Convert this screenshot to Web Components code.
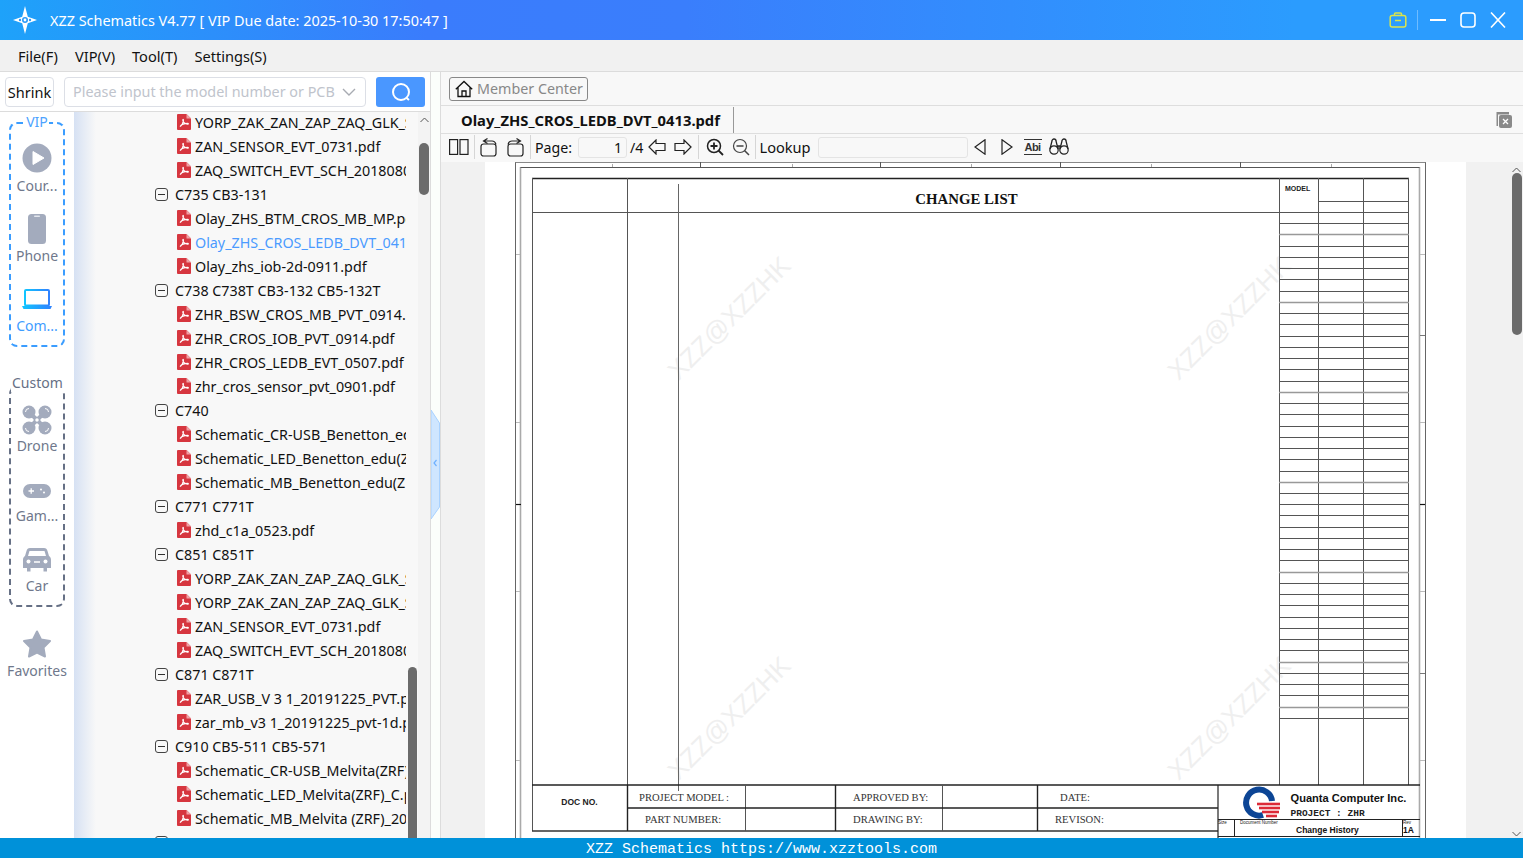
<!DOCTYPE html>
<html lang="en"><head><meta charset="utf-8"><title>XZZ Schematics</title>
<style>
html,body{margin:0;padding:0;height:100%;overflow:hidden}
body{font-family:"Noto Sans","Liberation Sans",sans-serif;font-size:14px;color:#111;background:#fff}
</style></head><body>
<xzz-app></xzz-app>
<script>
const NS='http://www.w3.org/2000/svg';
function def(name,css,html,init){
  customElements.define(name,class extends HTMLElement{
    constructor(){super();const r=this.attachShadow({mode:'open'});r.innerHTML='<style>'+css+'</style>'+html;if(init)init(r,this);}
  });
}
const pdfIcon=`<svg width="14" height="16" viewBox="0 0 14 16"><path d="M1 0H9.5L14 4.5V15a1 1 0 0 1-1 1H1a1 1 0 0 1-1-1V1a1 1 0 0 1 1-1Z" fill="#d6363f"/><path d="M9.5 0V4.5H14Z" fill="#f0a0a5"/><path d="M3 12.5C4.6 11.6 6 9 6.4 6.5 6.6 5.2 5.9 5 5.8 6 5.6 7.7 7.9 10 10.6 10.2 11.7 10.2 11.6 9.4 10.6 9.4 8.2 9.4 4.6 10.4 3 12.5Z" fill="none" stroke="#fff" stroke-width="1.1"/></svg>`;

def('xzz-titlebar',`
:host{display:flex;align-items:center;height:40px;flex:none;color:#fff;background:linear-gradient(90deg,#1ea2fa 0,#3a7cfc 28%,#3a7efc 45%,#2b9cfe 85%,#2b9cfe 100%);}
.logo{margin-left:11px;width:28px;height:28px;flex:none}
.t{margin-left:11px;font-size:14.42px;white-space:nowrap;flex:1}
.r{display:flex;align-items:center}
svg{display:block}
.sep{width:1px;height:20px;background:#6fbcff;margin:0 11px 0 10px}
`,`
<svg class="logo" viewBox="0 0 28 28"><path d="M14 0 16.800 10.800 26 14 16.800 17.200 14 28 11.200 17.200 2 14 11.200 10.800Z" fill="#fff"/><circle cx="14" cy="14" r="3" fill="#2a9bf9"/><circle cx="14" cy="14" r="1.4" fill="#fff"/><circle cx="9" cy="14" r="1.2" fill="#2a9bf9"/><circle cx="19" cy="14" r="1.2" fill="#2a9bf9"/></svg>
<div class="t"><slot></slot></div>
<div class="r">
<svg width="18" height="16" viewBox="0 0 18 16" fill="none" stroke="#dbe44c" stroke-width="1.5"><rect x="1.2" y="3.5" width="15.6" height="11.5" rx="2"/><path d="M5.5 3.5V2a1 1 0 0 1 1-1h5a1 1 0 0 1 1 1v1.5M6 8.5h6"/></svg>
<div class="sep"></div>
<svg width="18" height="16" viewBox="0 0 18 16"><path d="M1 8H17" stroke="#fff" stroke-width="2"/></svg>
<svg style="margin-left:12px" width="18" height="16" viewBox="0 0 18 16"><rect x="2" y="1" width="14" height="14" rx="3" fill="none" stroke="#fff" stroke-width="1.6"/></svg>
<svg style="margin:0 16px 0 12px" width="18" height="16" viewBox="0 0 18 16"><path d="M2 0.5 16 15.5M16 0.5 2 15.5" stroke="#fff" stroke-width="1.6"/></svg>
</div>`);

def('xzz-menubar',`
:host{display:flex;gap:17px;align-items:center;height:32px;flex:none;background:#f1f1f1;padding-left:18px;box-sizing:border-box;font-size:14.6px;border-bottom:1px solid #dcdcdc}
`,`<slot></slot>`);

def('xzz-searchrow',`
:host{display:flex;align-items:center;height:40px;flex:none;box-sizing:border-box;border-bottom:1px solid #dcdcdc;padding:0 0 0 5px;background:#fff;}
.s{width:49px;height:30px;box-sizing:border-box;border:1px solid #dcdfe6;border-radius:4px;display:flex;align-items:center;justify-content:center;font-size:14.5px;flex:none;white-space:nowrap}
.i{margin-left:10px;width:302px;height:30px;box-sizing:border-box;border:1px solid #dcdfe6;border-radius:4px;display:flex;align-items:center;padding:0 9px 0 8px;color:#c0c4cc;font-size:14.35px;flex:none;white-space:nowrap;justify-content:space-between}
.b{margin-left:10px;width:49px;height:30px;border-radius:3px;background:#4a97ff;display:flex;align-items:center;justify-content:center;flex:none}
`,`<div class="s"><slot name="shrink"></slot></div>
<div class="i"><slot></slot><svg width="14" height="8" viewBox="0 0 14 8"><path d="M1 1 7 7 13 1" fill="none" stroke="#a8abb2" stroke-width="1.4"/></svg></div>
<div class="b"><svg width="20" height="20" viewBox="0 0 20 20"><circle cx="10" cy="10" r="8" fill="none" stroke="#fff" stroke-width="2"/><path d="M15 15.5 18 18" stroke="#fff" stroke-width="2"/></svg></div>`);

def('xzz-railitem',`
:host{display:flex;flex-direction:column;align-items:center;height:70px;box-sizing:border-box;font-size:14px;color:#6f788c;white-space:nowrap}
:host([active]){color:#3f9dff}
.ic{height:32px;width:32px;display:flex;align-items:center;justify-content:center;flex:none;margin-bottom:1px}
.lb{line-height:20px}
`,`<div class="ic"><slot name="icon"></slot></div><div class="lb"><slot></slot></div>`);

def('xzz-railgroup',`
:host{display:block;position:relative;width:56px;box-sizing:border-box;border:2px dashed var(--c);border-radius:8px;margin-left:9px}
.l{position:absolute;top:var(--lt,-11px);left:0;right:0;text-align:center;font-size:14px;line-height:18px;color:var(--tc);white-space:nowrap}
.l span{background:#fff;padding:0 1px}
`,`<div class="l"><span><slot name="legend"></slot></span></div><slot></slot>`);

def('xzz-rail',`
:host{display:block;width:74px;flex:none;background:#fff;padding-top:10px;box-sizing:border-box;overflow:hidden}
`,`<slot></slot>`);

def('xzz-group',`
:host{display:flex;align-items:center;height:24px;padding-left:81px;white-space:nowrap;overflow:hidden;font-size:14.3px}
.m{width:13px;height:13px;box-sizing:border-box;border:1px solid #444;border-radius:3px;margin-right:7px;flex:none;position:relative;display:flex;align-items:center;justify-content:center}
.m i{display:block;width:7px;height:1px;background:#333}
`,`<span class="m"><i></i></span><slot></slot>`);
def('xzz-file',`
:host{display:flex;align-items:center;height:24px;padding-left:103px;white-space:nowrap;overflow:hidden;font-size:14.3px}
:host([active]){color:#4b9bff}
svg{flex:none;margin-right:4px}
`,pdfIcon+`<slot></slot>`);

def('xzz-tree',`
:host{display:block;position:relative;flex:1;min-width:0;overflow:hidden;background:linear-gradient(90deg,#d6e1f3 0,#f8f8f8 22px)}
.list{margin-top:-2px;width:332px}
.track{position:absolute;left:344px;top:0;bottom:0;width:12px;background:#f3f3f3}
.up{position:absolute;left:2px;top:5px}
.th{position:absolute;background:#6b6b6b;border-radius:5px}
.a{left:1px;top:31px;width:10px;height:52px}
.b{left:334px;top:555px;width:9px;height:180px}
`,`<div class="list"><slot></slot></div>
<div class="track"><svg class="up" width="9" height="6" viewBox="0 0 9 6"><path d="M0.5 5 4.5 1 8.5 5" fill="none" stroke="#555"/></svg><div class="th a"></div></div>
<div class="th b"></div>`);

def('xzz-sidepanel',`
:host{display:flex;flex-direction:column;width:430px;flex:none;min-height:0}
.b{display:flex;flex:1;min-height:0}
`,`<slot name="top"></slot><div class="b"><slot></slot></div>`);

def('xzz-splitter',`
:host{display:block;position:relative;width:11px;flex:none;background:#fbfefb;box-sizing:border-box;border-left:1px solid #dcdcdc;border-right:1px solid #dcdcdc}
svg{position:absolute;left:0;top:338px}
`,`<svg width="9" height="110" viewBox="0 0 9 110"><path d="M0 0 8.5 13V97L0 109Z" fill="#cfe6ff" stroke="#a9d2ff" stroke-width="1"/><path d="M5.5 50 3 53 5.500 56" fill="none" stroke="#6fb1ff" stroke-width="1.2"/></svg>`);

def('xzz-memberbar',`
:host{display:flex;align-items:center;height:34px;flex:none;box-sizing:border-box;padding-left:8px;background:#f8f8f8;border-bottom:1px solid #dedede}
.b{display:flex;align-items:center;height:24px;width:139px;box-sizing:border-box;border:1px solid #888;border-radius:3px;padding-left:5px;color:#888;font-size:14.3px;white-space:nowrap;gap:4px}
`,`<div class="b"><svg width="18" height="18" viewBox="0 0 18 18" fill="none" stroke="#111" stroke-width="1.3"><path d="M0.8 9.2 9 1.5 17.2 9.200M3 7.500V16.500H15V7.500M7 16.500V11H11V16.500"/></svg><slot></slot></div>`);

def('xzz-tabbar',`
:host{display:flex;align-items:center;height:28px;flex:none;box-sizing:border-box;background:#f8f8f8;border-bottom:1px solid #dedede;padding-left:20px;position:relative}
.t{font-weight:700;font-size:14.77px;white-space:nowrap;color:#111;padding-right:13px;height:26px;line-height:26px;border-right:1px solid #999}
.x{margin-left:auto;margin-right:10px}
`,`<div class="t"><slot></slot></div>
<svg class="x" width="18" height="18" viewBox="0 0 18 18"><path d="M3 1H1.500V15H3V3.500H14V1Z" fill="#8a8a8a"/><rect x="4" y="4" width="13" height="13" rx="2" fill="#8a8a8a"/><path d="M8 8l5 5M13 8l-5 5" stroke="#fff" stroke-width="1.300"/></svg>`);

def('xzz-toolsep',`:host{display:block;width:1px;height:24px;background:#d6d6d6;flex:none}`,``);
def('xzz-toolbar',`
:host{display:flex;align-items:center;height:28px;flex:none;box-sizing:border-box;background:#f8f8f8;padding:0 0 2px 8px;font-size:14.2px;white-space:nowrap}
::slotted(svg){flex:none;display:block}
`,`<slot></slot>`);
def('xzz-numbox',`
:host{display:flex;align-items:center;justify-content:flex-end;height:21px;box-sizing:border-box;border:1px solid #e4e4e4;border-radius:3px;background:#f8f8f8;padding-right:4px;flex:none}
`,`<slot></slot>`);

/* the schematic: a drawing on its own canvas, in screen coordinates */
def('xzz-sheet',`
:host{display:block;width:981px;flex:none;background:#fff;overflow:hidden}
svg{display:block}
text{white-space:pre}
`,`<svg id="s" width="981" height="676" viewBox="485 162 981 676"></svg>`,(r)=>{
  const s=r.getElementById('s');
  const L=(x1,y1,x2,y2,c='#555',w=1)=>{const e=document.createElementNS(NS,'line');[['x1',x1],['y1',y1],['x2',x2],['y2',y2],['stroke',c],['stroke-width',w]].forEach(a=>e.setAttribute(a[0],a[1]));s.appendChild(e);};
  const T=(x,y,t,o={})=>{const e=document.createElementNS(NS,'text');e.setAttribute('x',x);e.setAttribute('y',y);e.textContent=t;
    e.setAttribute('font-family',o.f||'Liberation Serif');e.setAttribute('font-size',o.s||10);if(o.b)e.setAttribute('font-weight','700');
    e.setAttribute('fill',o.c||'#333');if(o.a)e.setAttribute('text-anchor',o.a);if(o.r)e.setAttribute('transform',o.r);s.appendChild(e);};
  // watermarks
  [[729,318],[1229,318],[729,718],[1229,718]].forEach(p=>T(p[0],p[1]+9,'XZZ@XZZHK',{f:'Liberation Sans',s:26,c:'#efefef',a:'middle',r:`rotate(-45 ${p[0]} ${p[1]})`}));
  // sheet frame
  L(515.5,162,515.5,838,'#666');L(520.5,167,520.5,838,'#aaa',1.6);
  L(1425.5,162,1425.5,838,'#666');L(1419.5,167,1419.5,838,'#aaa',1.6);
  L(515.5,162.500,1425.5,162.500,'#888');L(520.5,167.5,1419.5,167.5,'#555');
  [700,880,1060,1240].forEach(x=>L(x+.5,162,x+.5,167,'#555'));
  [612,792,971,1151,1331].forEach(x=>L(x+.5,164,x+.5,167,'#aaa'));
  [254,422,591,760].forEach(y=>{L(516,y+.5,520,y+.5,'#bbb');L(1420,y+.5,1425,y+.5,'#bbb');});
  [335,673].forEach(y=>{L(1420,y+.5,1425,y+.5,'#777');});
  L(516,504.5,521,504.5,'#111',1.2);L(1420,504.5,1425,504.5,'#111',1.2);
  // main table
  L(532,178.5,1409,178.5,'#222',1.6);
  L(532.5,178,532.5,831,'#555');L(1408.5,178,1408.5,785,'#555');
  L(532,212.5,1279,212.5,'#555');
  L(627.5,178,627.5,785,'#555');L(678.5,184,678.5,791,'#666');
  L(1279.5,178,1279.5,785,'#555');L(1318.5,178,1318.5,785,'#555');L(1363.5,178,1363.5,785,'#555');
  L(1318,201.5,1409,201.5,'#555');
  for(let i=0;i<=45;i++){const y=Math.round(212+i*11.24)+.5;const g=i%8==0&&i>0||i==2||i==44;L(1279,y,1409,y,g?'#999':'#555',g?1.3:1);}
  T(966.5,204,'CHANGE LIST',{s:14.8,b:1,c:'#111',a:'middle'});
  T(1285,191,'MODEL',{f:'Liberation Sans',s:7,b:1,c:'#222'});
  // title block
  L(532,785,1420,785,'#222',1.6);L(532,831,1218,831,'#333',1.6);
  L(627.5,785,627.5,831,'#222',1.4);L(745.5,785,745.5,831,'#555');L(835.5,785,835.5,831,'#222',1.4);L(942.5,785,942.5,831,'#555');L(1037.5,785,1037.5,831,'#222',1.4);
  L(628,808,1218,808,'#222',1.4);
  L(1218,785,1218,838,'#222',1.2);L(1218,819.5,1420,819.5,'#222',1.2);L(1218,836.5,1420,836.5,'#222',1.2);
  L(1234.5,820,1234.5,836,'#222');L(1402.5,820,1402.5,836,'#222');
  T(579.5,805,'DOC NO.',{f:'Liberation Sans',s:8.5,b:1,c:'#222',a:'middle'});
  T(639,801,'PROJECT MODEL :',{s:10.6});T(645,823,'PART NUMBER:',{s:10.6});
  T(853,801,'APPROVED BY:',{s:10.6});T(853,823,'DRAWING BY:',{s:10.6});
  T(1060,801,'DATE:',{s:10.6});T(1055,823,'REVISON:',{s:10.6});
  // logo
  const a=document.createElementNS(NS,'path');a.setAttribute('d','M1263 815A13 13 0 1 1 1272 801');a.setAttribute('fill','none');a.setAttribute('stroke','#0c4595');a.setAttribute('stroke-width','6');s.appendChild(a);
  [[1257,804,1280],[1259,808,1280],[1262,812,1279],[1266,816,1277]].forEach(q=>L(q[0],q[1],q[2],q[1],'#dc2a38',2.6));
  T(1290.500,802,'Quanta Computer Inc.',{f:'Liberation Sans',s:11.1,b:1,c:'#111'});
  T(1290.500,816,'PROJECT : ZHR',{f:'Liberation Mono',s:9.5,b:1,c:'#222'});
  T(1218,824,'Size',{f:'Liberation Sans',s:4.500,c:'#222'});
  T(1240,824,'Document Number',{f:'Liberation Sans',s:4.500,c:'#222'});
  T(1403,824,'Rev',{f:'Liberation Sans',s:4.500,c:'#222'});
  T(1296,833,'Change History',{f:'Liberation Sans',s:8.500,b:1,c:'#111'});
  T(1403,833,'1A',{f:'Liberation Sans',s:8.500,b:1,c:'#111'});
});

def('xzz-viewer',`
:host{display:flex;position:relative;flex:1;min-height:0;background:#f1f1f1;padding-left:44px;overflow:hidden}
.sb{position:absolute;right:0;top:0;bottom:0;width:12px;background:#f1f1f1}
.th{position:absolute;left:1px;top:11px;width:10px;height:162px;background:#6b6b6b;border-radius:5px}
svg{position:absolute;left:1px}
`,`<slot></slot><div class="sb"><svg style="top:5px" width="9" height="6" viewBox="0 0 9 6"><path d="M0.500 5 4.500 1 8.500 5" fill="none" stroke="#555"/></svg><div class="th"></div><svg style="bottom:1px" width="9" height="6" viewBox="0 0 9 6"><path d="M0.500 1 4.500 5 8.500 1" fill="none" stroke="#555"/></svg></div>`);

def('xzz-docpanel',`:host{display:flex;flex-direction:column;flex:1;min-width:0;min-height:0}`,`<slot></slot>`);
def('xzz-status',`
:host{display:flex;align-items:center;justify-content:center;height:20px;padding-top:2px;box-sizing:border-box;flex:none;background:#0091d9;color:#fff;font-family:"Liberation Mono",monospace;font-size:15px;white-space:nowrap}
`,`<slot></slot>`);
def('xzz-main',`:host{display:flex;flex:1;min-height:0}`,`<slot></slot>`);

const S='#a3abbd';
const rotor=(x,y,a)=>`<circle cx="${x}" cy="${y}" r="6.500" fill="${S}"/><path d="${a}" fill="none" stroke="#fff" stroke-width="1"/>`;
const icons={
play:`<svg slot="icon" style="margin-top:-2px" width="30" height="30" viewBox="0 0 30 30"><circle cx="15" cy="15" r="14.500" fill="${S}"/><path d="M11 8.500 22 15 11 21.500Z" fill="#fff" stroke="#fff" stroke-linejoin="round"/></svg>`,
phone:`<svg slot="icon" width="18" height="30" viewBox="0 0 18 30"><rect x="0" y="0" width="18" height="30" rx="3.500" fill="${S}"/><rect x="6" y="1.500" width="6" height="1.400" rx=".7" fill="#e4e7ee"/></svg>`,
laptop:`<svg slot="icon" width="30" height="20" viewBox="0 0 30 20"><defs><linearGradient id="lg" x1="0" x2="1"><stop offset="0" stop-color="#11c5ff"/><stop offset="1" stop-color="#2f82ff"/></linearGradient></defs><rect x="3" y="1" width="24" height="15.500" rx="1" fill="none" stroke="url(#lg)" stroke-width="2"/><path d="M0 17H30L28.500 20H1.500Z" fill="url(#lg)"/></svg>`,
drone:`<svg slot="icon" style="margin-top:2px" width="30" height="30" viewBox="0 0 30 30">${rotor(7,7,'M3.500 7A3.500 3.500 0 0 1 7 3.500')}${rotor(23,7,'M23 3.500A3.500 3.500 0 0 1 26.500 7')}${rotor(7,23,'M3.500 23A3.500 3.500 0 0 0 7 26.500')}${rotor(23,23,'M26.500 23A3.500 3.500 0 0 1 23 26.500')}<path d="M9 9 21 21M21 9 9 21" stroke="${S}" stroke-width="4"/><circle cx="15" cy="15" r="2.500" fill="#fff" stroke="${S}" stroke-width="1.500"/></svg>`,
game:`<svg slot="icon" style="margin-top:4px" width="28" height="14" viewBox="0 0 28 14"><rect width="28" height="14" rx="7" fill="${S}"/><path d="M5.500 7H11M8.200 4.300V9.700" stroke="#fff" stroke-width="1.300"/><circle cx="18" cy="5.500" r="1" fill="#fff"/><circle cx="21" cy="8.500" r="1" fill="#fff"/></svg>`,
car:`<svg slot="icon" style="margin-top:1px" width="28" height="24" viewBox="0 0 28 24"><path d="M7 0H21C23 0 24 1 24.500 3L26 8C27.500 9 28 10 28 12V20H24V23.500H20.500V20H7.500V23.500H4V20H0V12C0 10 .5 9 2 8L3.500 3C4 1 5 0 7 0Z" fill="${S}"/><path d="M6.500 3H21.500L23 8H5Z" fill="#fff"/><circle cx="5.500" cy="13.500" r="2" fill="#fff"/><circle cx="22.500" cy="13.500" r="2" fill="#fff"/><path d="M11 14H17" stroke="#fff" stroke-width="1.500"/></svg>`,
star:`<svg slot="icon" width="30" height="28" viewBox="0 0 30 28"><path d="M15 1.500 19 9.500 28 11 21.500 17.500 23 26.500 15 22.500 7 26.500 8.500 17.500 2 11 11 9.500Z" fill="${S}" stroke="${S}" stroke-width="2" stroke-linejoin="round"/></svg>`
};
const ri=(ic,t,a)=>`<xzz-railitem${a?' active':''}>${icons[ic]}${t}</xzz-railitem>`;
const tree=[
['f','YORP_ZAK_ZAN_ZAP_ZAQ_GLK_SCH.pdf'],['f','ZAN_SENSOR_EVT_0731.pdf'],['f','ZAQ_SWITCH_EVT_SCH_20180806.pdf'],
['g','C735 CB3-131'],['f','Olay_ZHS_BTM_CROS_MB_MP.pdf'],['a','Olay_ZHS_CROS_LEDB_DVT_0413.pdf'],['f','Olay_zhs_iob-2d-0911.pdf'],
['g','C738 C738T CB3-132 CB5-132T'],['f','ZHR_BSW_CROS_MB_PVT_0914.pdf'],['f','ZHR_CROS_IOB_PVT_0914.pdf'],['f','ZHR_CROS_LEDB_EVT_0507.pdf'],['f','zhr_cros_sensor_pvt_0901.pdf'],
['g','C740'],['f','Schematic_CR-USB_Benetton_edu(ZRF).pdf'],['f','Schematic_LED_Benetton_edu(ZRF).pdf'],['f','Schematic_MB_Benetton_edu(ZRF).pdf'],
['g','C771 C771T'],['f','zhd_c1a_0523.pdf'],
['g','C851 C851T'],['f','YORP_ZAK_ZAN_ZAP_ZAQ_GLK_SCH.pdf'],['f','YORP_ZAK_ZAN_ZAP_ZAQ_GLK_SCH.pdf'],['f','ZAN_SENSOR_EVT_0731.pdf'],['f','ZAQ_SWITCH_EVT_SCH_20180806.pdf'],
['g','C871 C871T'],['f','ZAR_USB_V 3 1_20191225_PVT.pdf'],['f','zar_mb_v3 1_20191225_pvt-1d.pdf'],
['g','C910 CB5-511 CB5-571'],['f','Schematic_CR-USB_Melvita(ZRF)_C.pdf'],['f','Schematic_LED_Melvita(ZRF)_C.pdf'],['f','Schematic_MB_Melvita (ZRF)_20.pdf'],
['g','C920 CB5-471']
].map(r=>r[0]=='g'?`<xzz-group>${r[1]}</xzz-group>`:`<xzz-file${r[0]=='a'?' active':''}>${r[1]}</xzz-file>`).join('');
const tsvg=(w,h,body,ml,attrs='')=>`<svg width="${w}" height="${h}" viewBox="0 0 ${w} ${h}" style="margin-left:${ml}px" fill="none" stroke="#222" stroke-width="1.200" ${attrs}>${body}</svg>`;

def('xzz-app',`
:host{display:flex;flex-direction:column;width:1523px;height:858px;overflow:hidden}
`,`
<xzz-titlebar>XZZ Schematics V4.77 [ VIP Due date: 2025-10-30 17:50:47 ]</xzz-titlebar>
<xzz-menubar><span>File(F)</span><span>VIP(V)</span><span>Tool(T)</span><span>Settings(S)</span></xzz-menubar>
<xzz-main>
  <xzz-sidepanel>
    <xzz-searchrow slot="top"><span slot="shrink">Shrink</span>Please input the model number or PCB</xzz-searchrow>
    <xzz-rail>
      <xzz-railgroup style="--c:#3b9dff;--tc:#4da3ff;height:225px;padding-top:19px"><span slot="legend">VIP</span>${ri('play','Cour...')}${ri('phone','Phone')}${ri('laptop','Com...',1)}</xzz-railgroup>
      <xzz-railgroup style="--c:#667085;--tc:#667085;--lt:-14px;height:221px;margin-top:39px;padding-top:15px"><span slot="legend">Custom</span>${ri('drone','Drone')}${ri('game','Gam...')}${ri('car','Car')}</xzz-railgroup>
      <xzz-railitem style="margin-top:21px">${icons.star}Favorites</xzz-railitem>
    </xzz-rail>
    <xzz-tree>${tree}</xzz-tree>
  </xzz-sidepanel>
  <xzz-splitter></xzz-splitter>
  <xzz-docpanel>
    <xzz-memberbar>Member Center</xzz-memberbar>
    <xzz-tabbar>Olay_ZHS_CROS_LEDB_DVT_0413.pdf</xzz-tabbar>
    <xzz-toolbar>
      ${tsvg(20,16,'<rect x=".6" y=".6" width="8" height="14.800"/><rect x="11" y=".6" width="8" height="14.800"/>',0)}
      <xzz-toolsep style="margin-left:5px"></xzz-toolsep>
      ${tsvg(18,19,'<rect x="1" y="6" width="15" height="12" rx="2.500"/><path d="M7.500 .5 3.500 3 7.500 5.500M4 3H12C14 3 15.500 4.500 16 6.500"/>',5)}
      ${tsvg(18,19,'<rect x="2" y="6" width="15" height="12" rx="2.500"/><path d="M10.500 .5 14.500 3 10.500 5.500M14 3H6C4 3 2.500 4.500 2 6.500"/>',8)}
      <xzz-toolsep style="margin-left:6px"></xzz-toolsep>
      <span style="margin-left:4px">Page:</span>
      <xzz-numbox style="width:49px;margin-left:6px">1</xzz-numbox>
      <span style="margin-left:3px">/4</span>
      ${tsvg(18,16,'<path d="M1 8 8 1V4.500H17V11.500H8V15Z"/>',5)}
      ${tsvg(18,16,'<path d="M17 8 10 1V4.500H1V11.500H10V15Z"/>',8)}
      <xzz-toolsep style="margin-left:6px"></xzz-toolsep>
      ${tsvg(18,18,'<circle cx="8" cy="8" r="6.500" stroke-width="1.500"/><path d="M12.500 12.500 17 17" stroke-width="1.800"/><path d="M4.500 8H11.500M8 4.500V11.500" stroke-width="1.800"/>',7)}
      ${tsvg(18,18,'<circle cx="8" cy="8" r="6.500" stroke="#444"/><path d="M12.500 12.500 17 17M4.500 8H11.500" stroke="#444" stroke-width="1.500"/>',8)}
      <xzz-toolsep style="margin-left:5px"></xzz-toolsep>
      <span style="margin-left:3px;font-size:14.6px">Lookup</span>
      <xzz-numbox style="width:150px;margin-left:7px"></xzz-numbox>
      ${tsvg(12,16,'<path d="M11 .8 1 8 11 15.200Z"/>',6)}
      ${tsvg(12,16,'<path d="M1 .8 11 8 1 15.200Z"/>',15)}
      <span style="margin-left:11px;width:18px;font:700 11px/14px 'Liberation Sans',sans-serif;letter-spacing:-.6px;color:#333;border-top:1px solid #333;border-bottom:1px solid #333;flex:none;text-align:center">Abi</span>
      ${tsvg(20,18,'<circle cx="5" cy="12" r="4.200"/><circle cx="15" cy="12" r="4.200"/><path d="M1 11 3 3A2 2 0 0 1 7 3L9 11V8H11V11L13 3A2 2 0 0 1 17 3L19 11" stroke-width="1.300"/>',7,'')}
    </xzz-toolbar>
    <xzz-viewer><xzz-sheet></xzz-sheet></xzz-viewer>
  </xzz-docpanel>
</xzz-main>
<xzz-status>XZZ Schematics https://www.xzztools.com</xzz-status>
`);
</script>
</body></html>
